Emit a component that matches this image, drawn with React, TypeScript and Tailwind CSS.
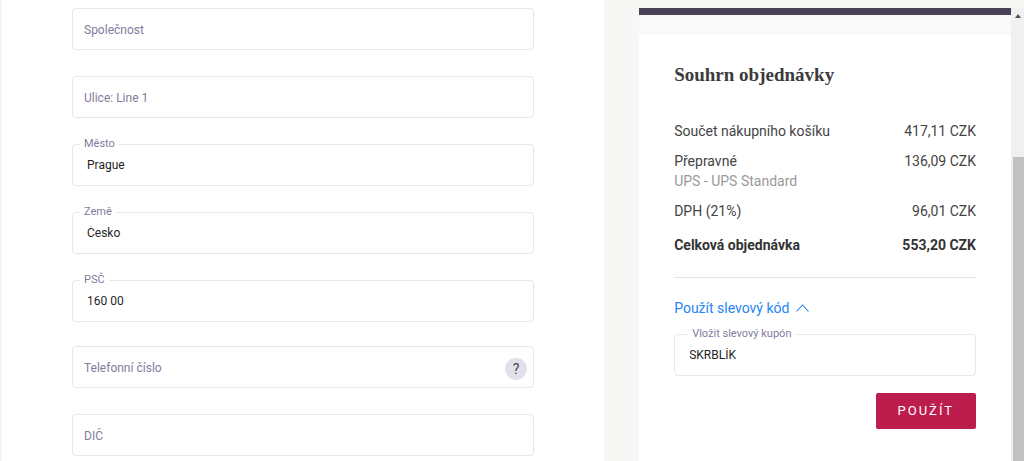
import React, { useState } from 'react';
import { clsx } from 'clsx';

interface FieldProps {
  id: string;
  label: string;
  value: string;
  onChange: (id: string, value: string) => void;
  hint?: string;
}

interface SummaryRowProps {
  label: string;
  amount: string;
  note?: string;
  className?: string;
}

const addressFields = [
  { id: 'company', label: 'Společnost' },
  { id: 'street', label: 'Ulice: Line 1' },
  { id: 'city', label: 'Město' },
  { id: 'country', label: 'Země' },
  { id: 'zip', label: 'PSČ' },
];

const contactFields = [
  { id: 'phone', label: 'Telefonní číslo', hint: 'Telefonní číslo pro doručení' },
  { id: 'vat', label: 'DIČ' },
];

const Field: React.FC<FieldProps> = ({ id, label, value, onChange, hint }) => (
  <div className="relative h-[42px]">
    <input
      id={id}
      type="text"
      value={value}
      onChange={(e) => onChange(id, e.target.value)}
      className="block h-full w-full rounded border border-[#e6e6eb] bg-white px-3.5 text-xs text-[#1f1f1f] outline-none focus:border-[#827c9c]"
    />
    <label
      htmlFor={id}
      className={clsx(
        'pointer-events-none absolute left-2 bg-white px-1 text-[#827c9c]',
        value ? '-top-2 text-[11px] leading-4' : 'top-3 text-xs leading-5'
      )}
    >
      {label}
    </label>
    {hint && (
      <button
        type="button"
        aria-label={hint}
        className="absolute right-[7px] top-3 flex h-[22px] w-[22px] items-center justify-center rounded-full bg-[#e2e0e9] text-sm text-[#4a4259]"
      >
        ?
      </button>
    )}
  </div>
);

const SummaryRow: React.FC<SummaryRowProps> = ({ label, amount, note, className }) => (
  <div className={clsx('flex justify-between leading-5', className)}>
    <dt>
      {label}
      {note && <span className="block text-[#999999]">{note}</span>}
    </dt>
    <dd>{amount}</dd>
  </div>
);

const Scrollbar: React.FC = () => (
  <div aria-hidden="true" className="mt-2 flex w-[13px] flex-col bg-[#f0f0f0]">
    <svg viewBox="0 0 13 16" className="h-4 w-[13px]">
      <path d="M7 6 L10 10 H4 Z" fill="#505050" />
    </svg>
    <div className="ml-0.5 mt-[133px] flex-1 bg-[#c1c1c1]" />
  </div>
);

export default function App() {
  const [values, setValues] = useState<Record<string, string>>({
    city: 'Prague',
    country: 'Česko',
    zip: '160 00',
  });
  const [coupon, setCoupon] = useState('SKRBLÍK');
  const [couponOpen, setCouponOpen] = useState(true);

  const handleChange = (id: string, value: string) => {
    setValues((prev) => ({ ...prev, [id]: value }));
  };

  return (
    <div className="flex min-h-screen bg-[#f7f7f5] font-['Roboto',sans-serif]">
      <form className="flex w-[59%] flex-col gap-6 border-l-2 border-[#f5f5f5] bg-white px-[70px] pt-2">
        <div className="flex flex-col gap-[26px]">
          {addressFields.map((field) => (
            <Field key={field.id} {...field} value={values[field.id] ?? ''} onChange={handleChange} />
          ))}
        </div>
        <div className="flex flex-col gap-[26px]">
          {contactFields.map((field) => (
            <Field key={field.id} {...field} value={values[field.id] ?? ''} onChange={handleChange} />
          ))}
        </div>
      </form>

      <aside className="ml-[35px] flex flex-1 flex-col pt-2">
        <div className="h-[7px] bg-[#4a4259]" />
        <div className="h-5 bg-[#f9f9f9]" />
        <section className="flex-1 bg-white px-[35px] pt-[26px]">
          <h2 className="font-['Liberation_Serif',serif] text-[19px] font-bold leading-7 text-[#3b3b3b]">
            Souhrn objednávky
          </h2>

          <dl className="mt-8 flex flex-col gap-[10px] border-b border-[#e3e3e3] pb-[22px] text-sm text-[#444444]">
            <SummaryRow label="Součet nákupního košíku" amount="417,11 CZK" />
            <SummaryRow label="Přepravné" note="UPS - UPS Standard" amount="136,09 CZK" />
            <SummaryRow label="DPH (21%)" amount="96,01 CZK" />
            <SummaryRow
              label="Celková objednávka"
              amount="553,20 CZK"
              className="mt-1 font-bold text-[#333333]"
            />
          </dl>

          <button
            type="button"
            aria-expanded={couponOpen}
            onClick={() => setCouponOpen(!couponOpen)}
            className="mt-5 flex items-center gap-[7px] text-sm leading-5 text-[#2684f5]"
          >
            Použít slevový kód
            <svg viewBox="0 0 13 8" className={clsx('h-2 w-[13px]', !couponOpen && 'rotate-180')} fill="none">
              <path d="M0.5 7.5 L6.5 1 L12.5 7.5" stroke="currentColor" strokeWidth="1.1" />
            </svg>
          </button>

          {couponOpen && (
            <div>
              <div className="relative mt-4 h-[42px]">
                <input
                  id="coupon"
                  type="text"
                  value={coupon}
                  onChange={(e) => setCoupon(e.target.value)}
                  className="block h-full w-full rounded border border-[#e8e8e8] bg-white px-3.5 text-xs text-[#1f1f1f] outline-none focus:border-[#827c9c]"
                />
                <label
                  htmlFor="coupon"
                  className="pointer-events-none absolute -top-2 left-3.5 bg-white px-1 text-[11px] leading-4 text-[#827c9c]"
                >
                  Vložit slevový kupón
                </label>
              </div>
              <button
                type="button"
                className="ml-auto mt-[17px] block h-9 rounded-xs bg-[#bc1d4c] px-[22px] text-[13px] tracking-[2px] text-white"
              >
                POUŽÍT
              </button>
            </div>
          )}
        </section>
      </aside>

      <Scrollbar />
    </div>
  );
}
